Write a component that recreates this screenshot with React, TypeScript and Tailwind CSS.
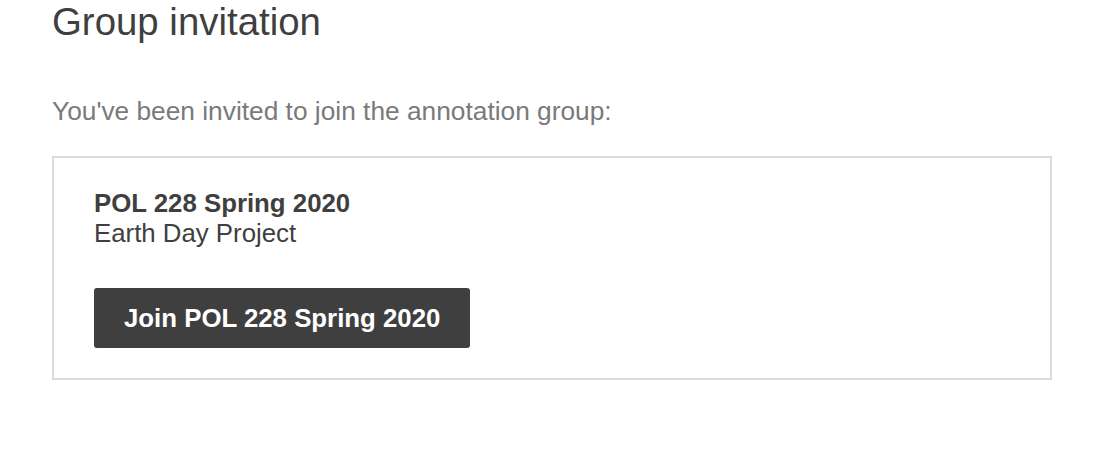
export default function App() {
  return (
    <div className="w-[1120px] h-[456px] bg-white pl-[52px] pr-[68px] font-['Liberation_Sans',Arial,sans-serif] overflow-hidden">
      <h1 className="text-[38.4px] leading-[44px] text-[#3f3f3f] mt-0">Group invitation</h1>
      <p className="mt-[52px] text-[26.3px] leading-[30px] text-[#7a7a7a]">You've been invited to join the annotation group:</p>
      <div className="mt-[30px] w-[1000px] border-2 border-[#dbdbdb] px-[40px] pt-[30px] pb-[30px]">
        <div className="text-[25.8px] leading-[30px] text-[#3f3f3f] font-bold">POL 228 Spring 2020</div>
        <div className="text-[25.8px] leading-[30px] text-[#3f3f3f]">Earth Day Project</div>
        <button className="mt-[40px] h-[60px] px-[30px] bg-[#3f3f3f] rounded-[3px] text-white text-[25.8px] font-bold">Join POL 228 Spring 2020</button>
      </div>
    </div>
  );
}
